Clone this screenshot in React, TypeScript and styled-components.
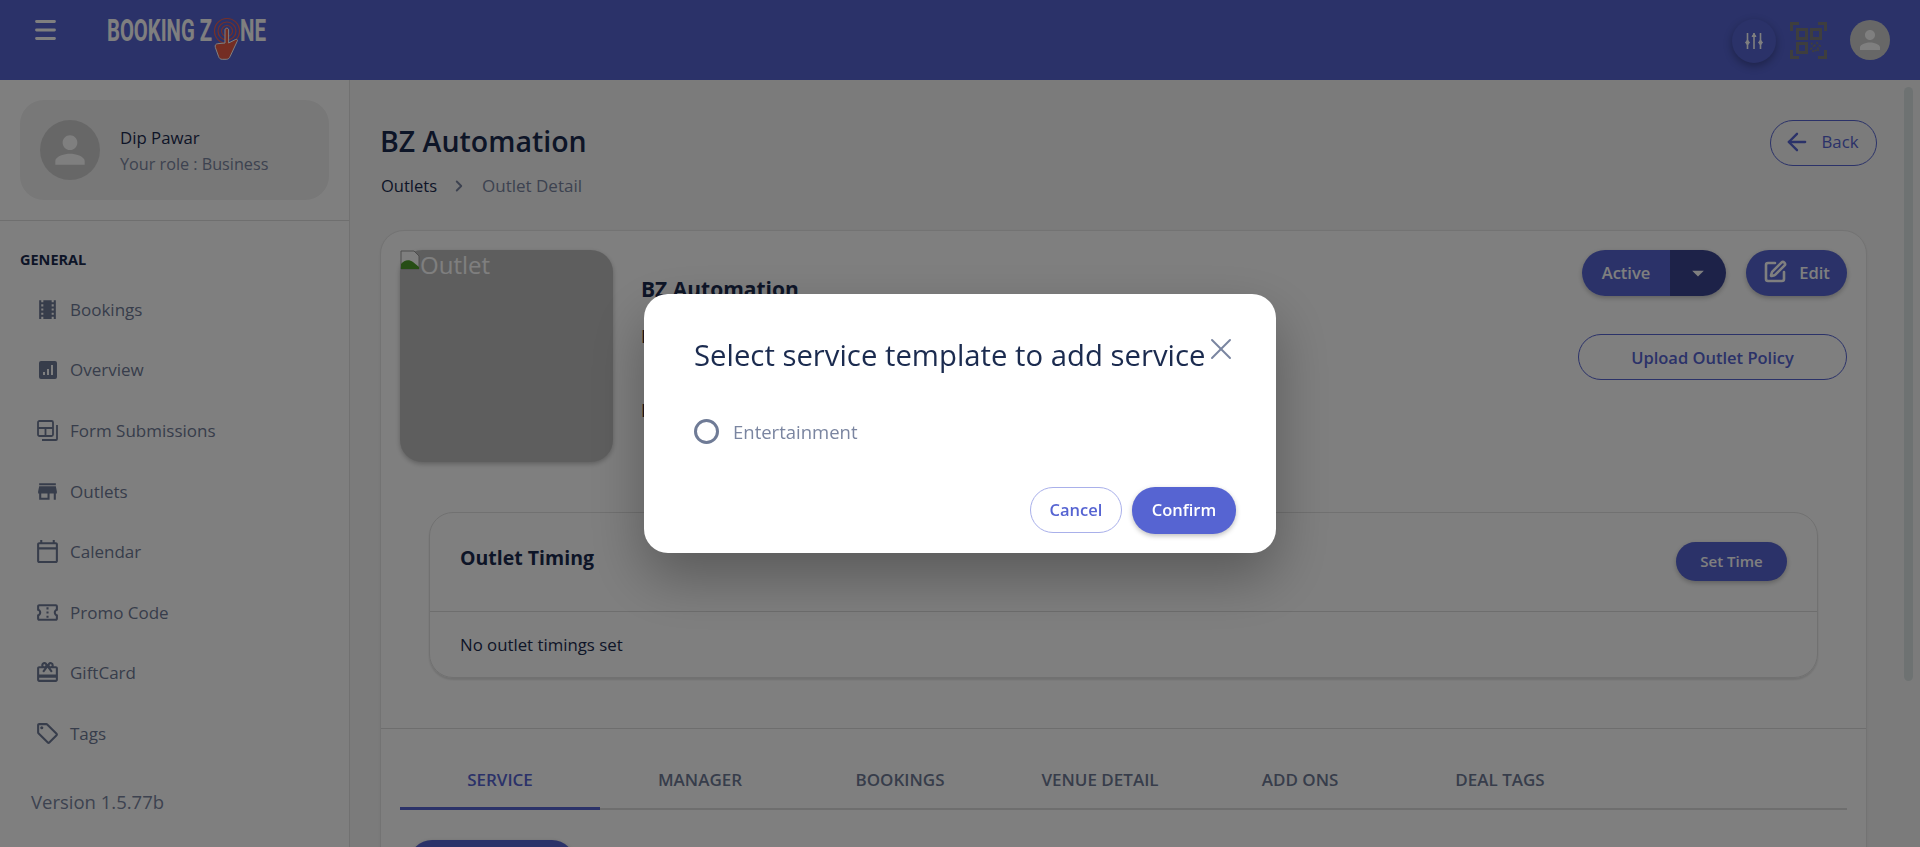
import React from 'react'
import styled, { createGlobalStyle } from 'styled-components'
import { ArrowLeft, ChevronRight, SquarePen, X } from 'lucide-react'
import {
  MdArrowDropDown,
  MdLocalMovies,
  MdOutlineCalendarToday,
  MdOutlineCardGiftcard,
  MdOutlineConfirmationNumber,
  MdOutlineLocalOffer,
  MdPerson,
  MdStore,
} from 'react-icons/md'

const primary = '#5664d2'
const ink = '#1b2b4f'
const muted = '#7a85a0'
const mutedDark = '#6f7a96'
const font = '"Open Sans", "Noto Sans", sans-serif'

const GlobalStyle = createGlobalStyle`
  html, body {
    margin: 0;
    height: 847px;
    overflow: hidden;
    background: #fff;
    font-family: ${font};
  }
  * { box-sizing: border-box; }
`

const Page = styled.div`
  height: 847px;
  display: flex;
  flex-direction: column;
  overflow: hidden;
`

/* header */
const Header = styled.header`
  height: 80px;
  flex: none;
  display: flex;
  align-items: flex-start;
  background: ${primary};
  color: #fff;
`
const MenuButton = styled.div`
  width: 32px;
  height: 32px;
  margin: 14px 0 0 29px;
  display: flex;
  align-items: center;
  justify-content: center;
`
const LogoMark = styled.svg`
  display: block;
  margin: 12px 0 0 45px;
`
const HeaderRight = styled.div`
  margin: 18px 30px 0 auto;
  display: flex;
  align-items: flex-start;
`
const RoundButton = styled.div`
  width: 44px;
  height: 44px;
  margin-top: 1px;
  border-radius: 50%;
  background: ${primary};
  box-shadow: 0 3px 8px rgba(0, 0, 0, 0.3);
  display: flex;
  align-items: center;
  justify-content: center;
`
const QrMark = styled.svg`
  display: block;
  margin: 4px 23px 0 14px;
`
const HeaderAvatar = styled.div`
  width: 40px;
  height: 40px;
  margin-top: 2px;
  border-radius: 50%;
  background: #cfcfcf;
  color: #fff;
  font-size: 30px;
  display: flex;
  align-items: center;
  justify-content: center;
`

const Body = styled.div`
  flex: 1;
  display: flex;
  min-height: 0;
`

/* sidebar */
const Sidebar = styled.aside`
  width: 350px;
  flex: none;
  background: #fff;
  border-right: 1px solid #e2e2e2;
  padding-top: 20px;
`
const UserCard = styled.div`
  width: 309px;
  height: 100px;
  margin-left: 20px;
  padding-left: 20px;
  display: flex;
  align-items: center;
  gap: 20px;
  border-radius: 24px;
  background: #f0f0f0;
`
const UserAvatar = styled.div`
  width: 60px;
  height: 60px;
  border-radius: 50%;
  background: #cfcfcf;
  color: #fff;
  font-size: 44px;
  display: flex;
  align-items: center;
  justify-content: center;
`
const UserName = styled.div`
  font-size: 16.8px;
  line-height: 26px;
  margin-top: 2px;
  font-weight: 500;
  color: ${ink};
`
const UserRole = styled.div`
  font-size: 16.2px;
  line-height: 26px;
  color: ${muted};
`
const SideDivider = styled.div`
  height: 1px;
  margin-top: 20px;
  background: #dedede;
`
const SideHeading = styled.div`
  margin: 29px 0 0 20px;
  font-size: 14.5px;
  line-height: 20px;
  font-weight: 700;
  color: ${ink};
`
const SideMenu = styled.nav`
  margin-top: 9px;
`
const SideItem = styled.div`
  height: 60.6px;
  padding-left: 35px;
  display: flex;
  align-items: center;
  gap: 10px;
  font-size: 17px;
  font-weight: 500;
  color: ${mutedDark};
`
const SideIcon = styled.span`
  width: 25px;
  height: 25px;
  font-size: 25px;
  display: flex;
  align-items: center;
  justify-content: center;
`
const Version = styled.div`
  margin: 26px 0 0 31px;
  font-size: 18.5px;
  line-height: 24px;
  color: ${muted};
`

/* main */
const Main = styled.main`
  flex: 1;
  min-width: 0;
  padding: 0 53px 0 30px;
  background: #f7f7f7;
  overflow: hidden;
`
const TitleRow = styled.div`
  height: 150px;
  display: flex;
  justify-content: space-between;
  align-items: flex-start;
`
const PageTitle = styled.h1`
  margin: 41px 0 0 0;
  font-size: 28.5px;
  line-height: 40px;
  font-weight: 600;
  color: ${ink};
`
const Crumbs = styled.div`
  margin: 13px 0 0 1px;
  display: flex;
  align-items: center;
  font-size: 16.5px;
  line-height: 24px;
  font-weight: 500;
  color: ${ink};
`
const CrumbCurrent = styled.span`
  font-size: 17px;
  color: ${muted};
`
const CrumbArrow = styled.span`
  width: 45px;
  padding-left: 13px;
  display: flex;
  color: ${muted};
`
const Button = styled.button<{ $outline?: boolean; $height?: number; $width?: number }>`
  height: ${(p) => p.$height ?? 46}px;
  width: ${(p) => (p.$width ? `${p.$width}px` : 'auto')};
  border-radius: 23px;
  border: 1px solid ${(p) => (p.$outline ? primary : 'transparent')};
  background: ${(p) => (p.$outline ? 'transparent' : primary)};
  color: ${(p) => (p.$outline ? primary : '#fff')};
  box-shadow: ${(p) => (p.$outline ? 'none' : '0 2px 5px rgba(0, 0, 0, 0.25)')};
  display: flex;
  align-items: center;
  justify-content: center;
  gap: 12px;
  padding: 0 0 2px;
  font-family: ${font};
  font-size: 16.5px;
  font-weight: 600;
`
const BackButton = styled(Button)`
  margin: 40px 0 0 auto;
  padding: 0 5px 3px 0;
  gap: 10px;
  transform: translateX(10px);
  font-weight: 500;
  font-size: 16.8px;
`
const UploadButton = styled(Button)`
  padding: 0;
`
const Card = styled.section`
  border-radius: 24px;
  border: 1px solid #e6e6e6;
  background: #fff;
  box-shadow: 0 1px 3px rgba(0, 0, 0, 0.06);
`
const TopRow = styled.div`
  display: flex;
  padding: 19px 19px 0;
`
const OutletImage = styled.div`
  width: 213px;
  height: 212px;
  flex: none;
  border-radius: 22px;
  background: #bdbdbd;
  box-shadow: 0 2px 5px rgba(0, 0, 0, 0.25);
  color: #fff;
  font-size: 24px;
  line-height: 30px;
  display: flex;
  align-items: flex-start;
`
const OutletInfo = styled.div`
  margin-left: 28px;
  padding-top: 26px;
`
const OutletName = styled.div`
  font-size: 21px;
  line-height: 26px;
  font-weight: 700;
  color: ${ink};
`
const OutletLine = styled.div<{ $gap: number }>`
  margin-top: ${(p) => p.$gap}px;
  font-size: 18px;
  line-height: 24px;
  color: #3a2c28;
`
const Actions = styled.div`
  margin-left: auto;
  display: flex;
  flex-direction: column;
  align-items: flex-end;
  gap: 38px;
`
const ActionRow = styled.div`
  display: flex;
  gap: 20px;
`
const Split = styled.div`
  width: 144px;
  height: 46px;
  display: flex;
  border-radius: 23px;
  overflow: hidden;
  box-shadow: 0 2px 5px rgba(0, 0, 0, 0.25);
  color: #fff;
  font-size: 16.5px;
  font-weight: 600;
`
const SplitLabel = styled.div`
  width: 88px;
  padding-bottom: 2px;
  background: ${primary};
  display: flex;
  align-items: center;
  justify-content: center;
`
const SplitCaret = styled.div`
  flex: 1;
  background: #3b4590;
  display: flex;
  align-items: center;
  justify-content: center;
  font-size: 28px;
`
const TimingCard = styled.div`
  margin: 50px 48px;
  height: 166px;
  border-radius: 24px;
  border: 1px solid #e2e2e2;
  box-shadow: 0 2px 2px rgba(0, 0, 0, 0.12);
`
const TimingHead = styled.div`
  height: 99px;
  padding: 0 30px;
  border-bottom: 1px solid #dcdcdc;
  display: flex;
  align-items: center;
  justify-content: space-between;
`
const TimingTitle = styled.div`
  margin-top: -10px;
  font-size: 19.5px;
  font-weight: 700;
  color: ${ink};
`
const SetTime = styled(Button)`
  margin-top: -2px;
  padding: 0;
  font-size: 15px;
`
const TimingBody = styled.div`
  padding: 21px 30px;
  font-size: 16.8px;
  line-height: 24px;
  color: ${ink};
`
const TabSection = styled.div`
  border-top: 1px solid #dcdcdc;
  padding: 25px 19px 0;
`
const Tabs = styled.div`
  display: flex;
  height: 56px;
  border-bottom: 2px solid #dcdcdc;
`
const Tab = styled.div<{ $active?: boolean }>`
  width: 200px;
  height: 56px;
  padding-top: 11px;
  text-align: center;
  font-size: 17px;
  line-height: 30px;
  font-weight: 600;
  color: ${(p) => (p.$active ? primary : mutedDark)};
  border-bottom: 3px solid ${(p) => (p.$active ? primary : 'transparent')};
`
const AddService = styled(Button)`
  margin: 30px 0 0 9px;
`
const ScrollThumb = styled.div`
  position: fixed;
  top: 87px;
  left: 1904px;
  width: 9px;
  height: 594px;
  border-radius: 5px;
  background: #dde5e5;
`

/* overlay + modal */
const Overlay = styled.div`
  position: fixed;
  inset: 0;
  background: rgba(0, 0, 0, 0.5);
  display: flex;
  align-items: center;
  justify-content: center;
`
const Modal = styled.div`
  position: relative;
  width: 632px;
  height: 259px;
  padding: 42px 40px 0 50px;
  border-radius: 24px;
  background: #fff;
  box-shadow: 0 24px 56px rgba(0, 0, 0, 0.3);
`
const ModalTitle = styled.h2`
  margin: 0;
  font-size: 29.3px;
  line-height: 38px;
  font-weight: 500;
  color: ${ink};
  white-space: nowrap;
`
const CloseButton = styled.div`
  position: absolute;
  top: 37px;
  right: 37px;
  display: flex;
  color: #7a85a0;
`
const RadioRow = styled.div`
  margin-top: 45px;
  height: 24px;
  display: flex;
  align-items: center;
  gap: 14px;
  font-size: 18.5px;
  color: ${muted};
`
const RadioCircle = styled.span`
  width: 25px;
  height: 25px;
  border-radius: 50%;
  border: 3px solid #6f7b96;
`
const ModalFooter = styled.div`
  margin-top: 44px;
  display: flex;
  justify-content: flex-end;
  gap: 10px;
`
const CancelButton = styled(Button)`
  border-color: #a9b0ea;
  background: #fff;
`

const sideItems = [
  { label: 'Bookings', icon: <MdLocalMovies /> },
  {
    label: 'Overview',
    icon: (
      <svg width="18" height="18" viewBox="0 0 18 18">
        <path
          fillRule="evenodd"
          d="M2 0h14a2 2 0 0 1 2 2v14a2 2 0 0 1-2 2H2a2 2 0 0 1-2-2V2a2 2 0 0 1 2-2zM4 11v3h2v-3zM8 8v6h2V8zM12 4v10h2V4z"
          fill="currentColor"
        />
      </svg>
    ),
  },
  {
    label: 'Form Submissions',
    icon: (
      <svg width="21" height="21" viewBox="0 0 21 21" fill="none" stroke="currentColor" strokeWidth="1.8">
        <rect x="1" y="1" width="15" height="15" rx="1.5" />
        <path d="M1 8h15M8.5 8v8M20 5v14a1 1 0 0 1-1 1H5" />
      </svg>
    ),
  },
  { label: 'Outlets', icon: <MdStore /> },
  { label: 'Calendar', icon: <MdOutlineCalendarToday /> },
  { label: 'Promo Code', icon: <MdOutlineConfirmationNumber /> },
  { label: 'GiftCard', icon: <MdOutlineCardGiftcard /> },
  { label: 'Tags', icon: <MdOutlineLocalOffer /> },
]

const tabs = ['SERVICE', 'MANAGER', 'BOOKINGS', 'VENUE DETAIL', 'ADD ONS', 'DEAL TAGS']

function MenuIcon() {
  return (
    <svg width="21" height="20" viewBox="0 0 21 20" fill="none" stroke="#fff" strokeWidth="2.8" strokeLinecap="round">
      <path d="M1.5 1.5h18M1.5 10h18M1.5 18.5h18" />
    </svg>
  )
}

function BrandLogo() {
  return (
    <LogoMark width="162" height="52" viewBox="0 0 162 52">
      <g fill="#fff" fontFamily="Roboto, sans-serif" fontSize="32" fontWeight="700">
        <text x="1" y="29" textLength="105" lengthAdjust="spacingAndGlyphs">BOOKING Z</text>
        <text x="134" y="29" textLength="26" lengthAdjust="spacingAndGlyphs">NE</text>
      </g>
      <g fill="none" stroke="#f0604c" strokeWidth="1.2">
        <circle cx="121" cy="19" r="12.5" />
        <circle cx="121" cy="19" r="9" />
        <circle cx="121" cy="19" r="5.5" />
      </g>
      <path
        d="M119 18c0-2.4 3.6-2.4 3.6 0v13l7-3.5c1.4-.6 2.4.6 1.6 1.8l-7 15c-.8 2-2 3-4 3h-4c-2 0-3-1-3.7-3l-3.2-9c-.6-2 .6-3.5 2.4-3.6l7.3-.7z"
        fill="#e85a46"
        stroke="#fff"
        strokeWidth="1"
      />
    </LogoMark>
  )
}

function FilterIcon() {
  return (
    <svg width="20" height="20" viewBox="0 0 20 20" fill="#fff" stroke="#fff" strokeWidth="1.6">
      <path d="M3.5 2v16M10 2v16M16.5 2v16" fill="none" />
      <path d="M3.5 9l2 2.5-2 2.5-2-2.5zM10 2.5l2 3h-4zM16.5 9l2 2.5-2 2.5-2-2.5z" strokeWidth="1" />
    </svg>
  )
}

function QrIcon() {
  return (
    <QrMark width="37" height="37" viewBox="0 0 37 37" fill="none" stroke="#7c7c7c" strokeWidth="3">
      <path d="M1.5 9V1.5H9M28 1.5h7.5V9M1.5 28v7.5H9M35.5 28v7.5H28" />
      <rect x="7.5" y="7.5" width="9" height="9" />
      <rect x="21.5" y="7.5" width="9" height="9" />
      <rect x="7.5" y="21.5" width="9" height="9" />
      <path d="M21 21l3 3-3 3 3 3 3-3 3 3M24 24l3-3 3 3-3 3" strokeWidth="2" strokeDasharray="2 1.5" />
    </QrMark>
  )
}

function BrokenImage() {
  return (
    <svg width="20" height="20" viewBox="0 0 20 20">
      <path d="M1 1h13l5 5v13H1z" fill="#fff" stroke="#9a9a9a" />
      <path d="M1 19v-5c3-4 8-5 12-2l6 5v2z" fill="#4c9a2a" />
    </svg>
  )
}

export default function App() {
  return (
    <>
      <GlobalStyle />
      <Page>
        <Header>
          <MenuButton>
            <MenuIcon />
          </MenuButton>
          <BrandLogo />
          <HeaderRight>
            <RoundButton>
              <FilterIcon />
            </RoundButton>
            <QrIcon />
            <HeaderAvatar>
              <MdPerson />
            </HeaderAvatar>
          </HeaderRight>
        </Header>
        <Body>
          <Sidebar>
            <UserCard>
              <UserAvatar>
                <MdPerson />
              </UserAvatar>
              <div>
                <UserName>Dip Pawar</UserName>
                <UserRole>Your role : Business</UserRole>
              </div>
            </UserCard>
            <SideDivider />
            <SideHeading>GENERAL</SideHeading>
            <SideMenu>
              {sideItems.map((item) => (
                <SideItem key={item.label}>
                  <SideIcon>{item.icon}</SideIcon>
                  {item.label}
                </SideItem>
              ))}
            </SideMenu>
            <Version>Version 1.5.77b</Version>
          </Sidebar>
          <Main>
            <TitleRow>
              <div>
                <PageTitle>BZ Automation</PageTitle>
                <Crumbs>
                  Outlets
                  <CrumbArrow>
                    <ChevronRight size={18} strokeWidth={2.5} />
                  </CrumbArrow>
                  <CrumbCurrent>Outlet Detail</CrumbCurrent>
                </Crumbs>
              </div>
              <BackButton $outline $width={107}>
                <ArrowLeft size={28} strokeWidth={2} />
                Back
              </BackButton>
            </TitleRow>
            <Card>
              <TopRow>
                <OutletImage>
                  <BrokenImage />
                  Outlet
                </OutletImage>
                <OutletInfo>
                  <OutletName>BZ Automation</OutletName>
                  <OutletLine $gap={22}>Business</OutletLine>
                  <OutletLine $gap={50}>Location</OutletLine>
                </OutletInfo>
                <Actions>
                  <ActionRow>
                    <Split>
                      <SplitLabel>Active</SplitLabel>
                      <SplitCaret>
                        <MdArrowDropDown />
                      </SplitCaret>
                    </Split>
                    <Button $width={101}>
                      <SquarePen size={24} strokeWidth={2.6} />
                      Edit
                    </Button>
                  </ActionRow>
                  <UploadButton $outline $width={269}>
                    Upload Outlet Policy
                  </UploadButton>
                </Actions>
              </TopRow>
              <TimingCard>
                <TimingHead>
                  <TimingTitle>Outlet Timing</TimingTitle>
                  <SetTime $width={111} $height={39}>
                    Set Time
                  </SetTime>
                </TimingHead>
                <TimingBody>No outlet timings set</TimingBody>
              </TimingCard>
              <TabSection>
                <Tabs>
                  {tabs.map((tab, i) => (
                    <Tab key={tab} $active={i === 0}>
                      {tab}
                    </Tab>
                  ))}
                </Tabs>
                <AddService $width={166}>Add Service</AddService>
              </TabSection>
            </Card>
          </Main>
        </Body>
        <ScrollThumb />
      </Page>
      <Overlay>
        <Modal>
          <ModalTitle>Select service template to add service</ModalTitle>
          <CloseButton>
            <X size={36} strokeWidth={1.3} />
          </CloseButton>
          <RadioRow>
            <RadioCircle />
            Entertainment
          </RadioRow>
          <ModalFooter>
            <CancelButton $outline $width={92}>
              Cancel
            </CancelButton>
            <Button $width={104} $height={47}>
              Confirm
            </Button>
          </ModalFooter>
        </Modal>
      </Overlay>
    </>
  )
}
